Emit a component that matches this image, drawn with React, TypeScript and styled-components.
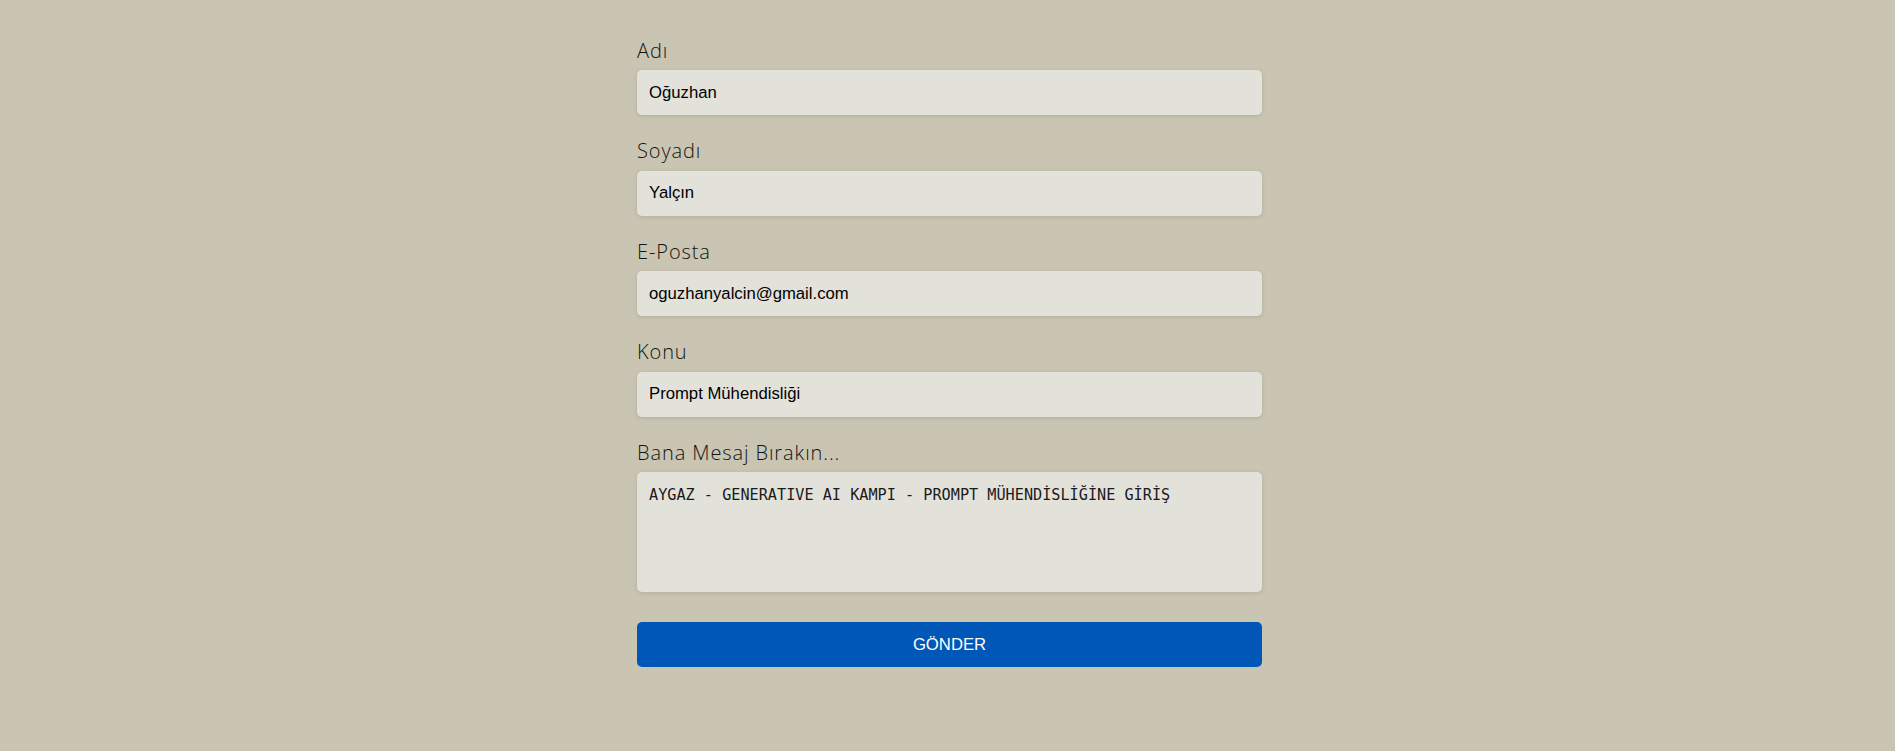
import React, { useState } from "react";
import styled, { createGlobalStyle } from "styled-components";

const GlobalStyle = createGlobalStyle`
    html, body {
        margin: 0;
        padding: 0;
        background-color: #c9c5b2;
    }
    * {
        box-sizing: border-box;
    }
`

function App(): React.ReactElement {

    const [form, setForm] = useState({
        name: "Oğuzhan",
        surname: "Yalçın",
        email: "oguzhanyalcin@gmail.com",
        subject: "Prompt Mühendisliği",
        message: "AYGAZ - GENERATIVE AI KAMPI - PROMPT MÜHENDİSLİĞİNE GİRİŞ",
    });

    const handleChange = (key: keyof typeof form) =>
        (e: React.ChangeEvent<HTMLInputElement | HTMLTextAreaElement>) => {
            setForm({ ...form, [key]: e.target.value });
        }

    return (
        <Wrapper>
            <GlobalStyle />
            <Form onSubmit={(e) => e.preventDefault()}>
                <Field>
                    <Label>Adı</Label>
                    <Input type="text" value={form.name} onChange={handleChange("name")} />
                </Field>
                <Field>
                    <Label>Soyadı</Label>
                    <Input type="text" value={form.surname} onChange={handleChange("surname")} />
                </Field>
                <Field>
                    <Label>E-Posta</Label>
                    <Input type="email" value={form.email} onChange={handleChange("email")} />
                </Field>
                <Field>
                    <Label>Konu</Label>
                    <Input type="text" value={form.subject} onChange={handleChange("subject")} />
                </Field>
                <Field>
                    <Label>Bana Mesaj Bırakın...</Label>
                    <TextArea value={form.message} onChange={handleChange("message")} />
                </Field>
                <SubmitButton type="submit">GÖNDER</SubmitButton>
            </Form>
        </Wrapper>
    )
}

const Wrapper = styled.div`
    display: flex;
    justify-content: center;
    width: 100%;
    min-height: 100vh;
    padding: 39px 0 0 4px;
    background-color: #c9c5b2;
`

const Form = styled.form`
    display: flex;
    flex-direction: column;
    width: 625px;
`

const Field = styled.div`
    display: flex;
    flex-direction: column;
    gap: 7px;
    margin-bottom: 24px;

    &:last-of-type {
        margin-bottom: 30px;
    }
`

const Label = styled.label`
    font-family: "Open Sans", "Lato", sans-serif;
    font-weight: 300;
    font-size: 20px;
    line-height: 24.4px;
    letter-spacing: 0.9px;
    color: #141410;
`

const Input = styled.input`
    height: 45px;
    padding: 0 12px;
    border: none;
    border-radius: 5px;
    background-color: #e3e2da;
    box-shadow: 0 1px 4px rgba(80, 74, 50, 0.18);
    font-family: "Liberation Sans", Arial, sans-serif;
    font-size: 16.7px;
    color: #000;
    outline: none;
`

const TextArea = styled.textarea`
    height: 120px;
    padding: 14px 12px;
    border: none;
    border-radius: 5px;
    background-color: #e3e2da;
    box-shadow: 0 1px 4px rgba(80, 74, 50, 0.18);
    font-family: "DejaVu Sans Mono", "Liberation Mono", monospace;
    font-size: 15.2px;
    color: #1a1a1a;
    resize: none;
    outline: none;
`

const SubmitButton = styled.button`
    height: 45px;
    border: none;
    border-radius: 5px;
    background-color: #0057b7;
    color: #fff;
    font-family: "Liberation Sans", Arial, sans-serif;
    font-size: 16.7px;
    cursor: pointer;
`

export default App;
